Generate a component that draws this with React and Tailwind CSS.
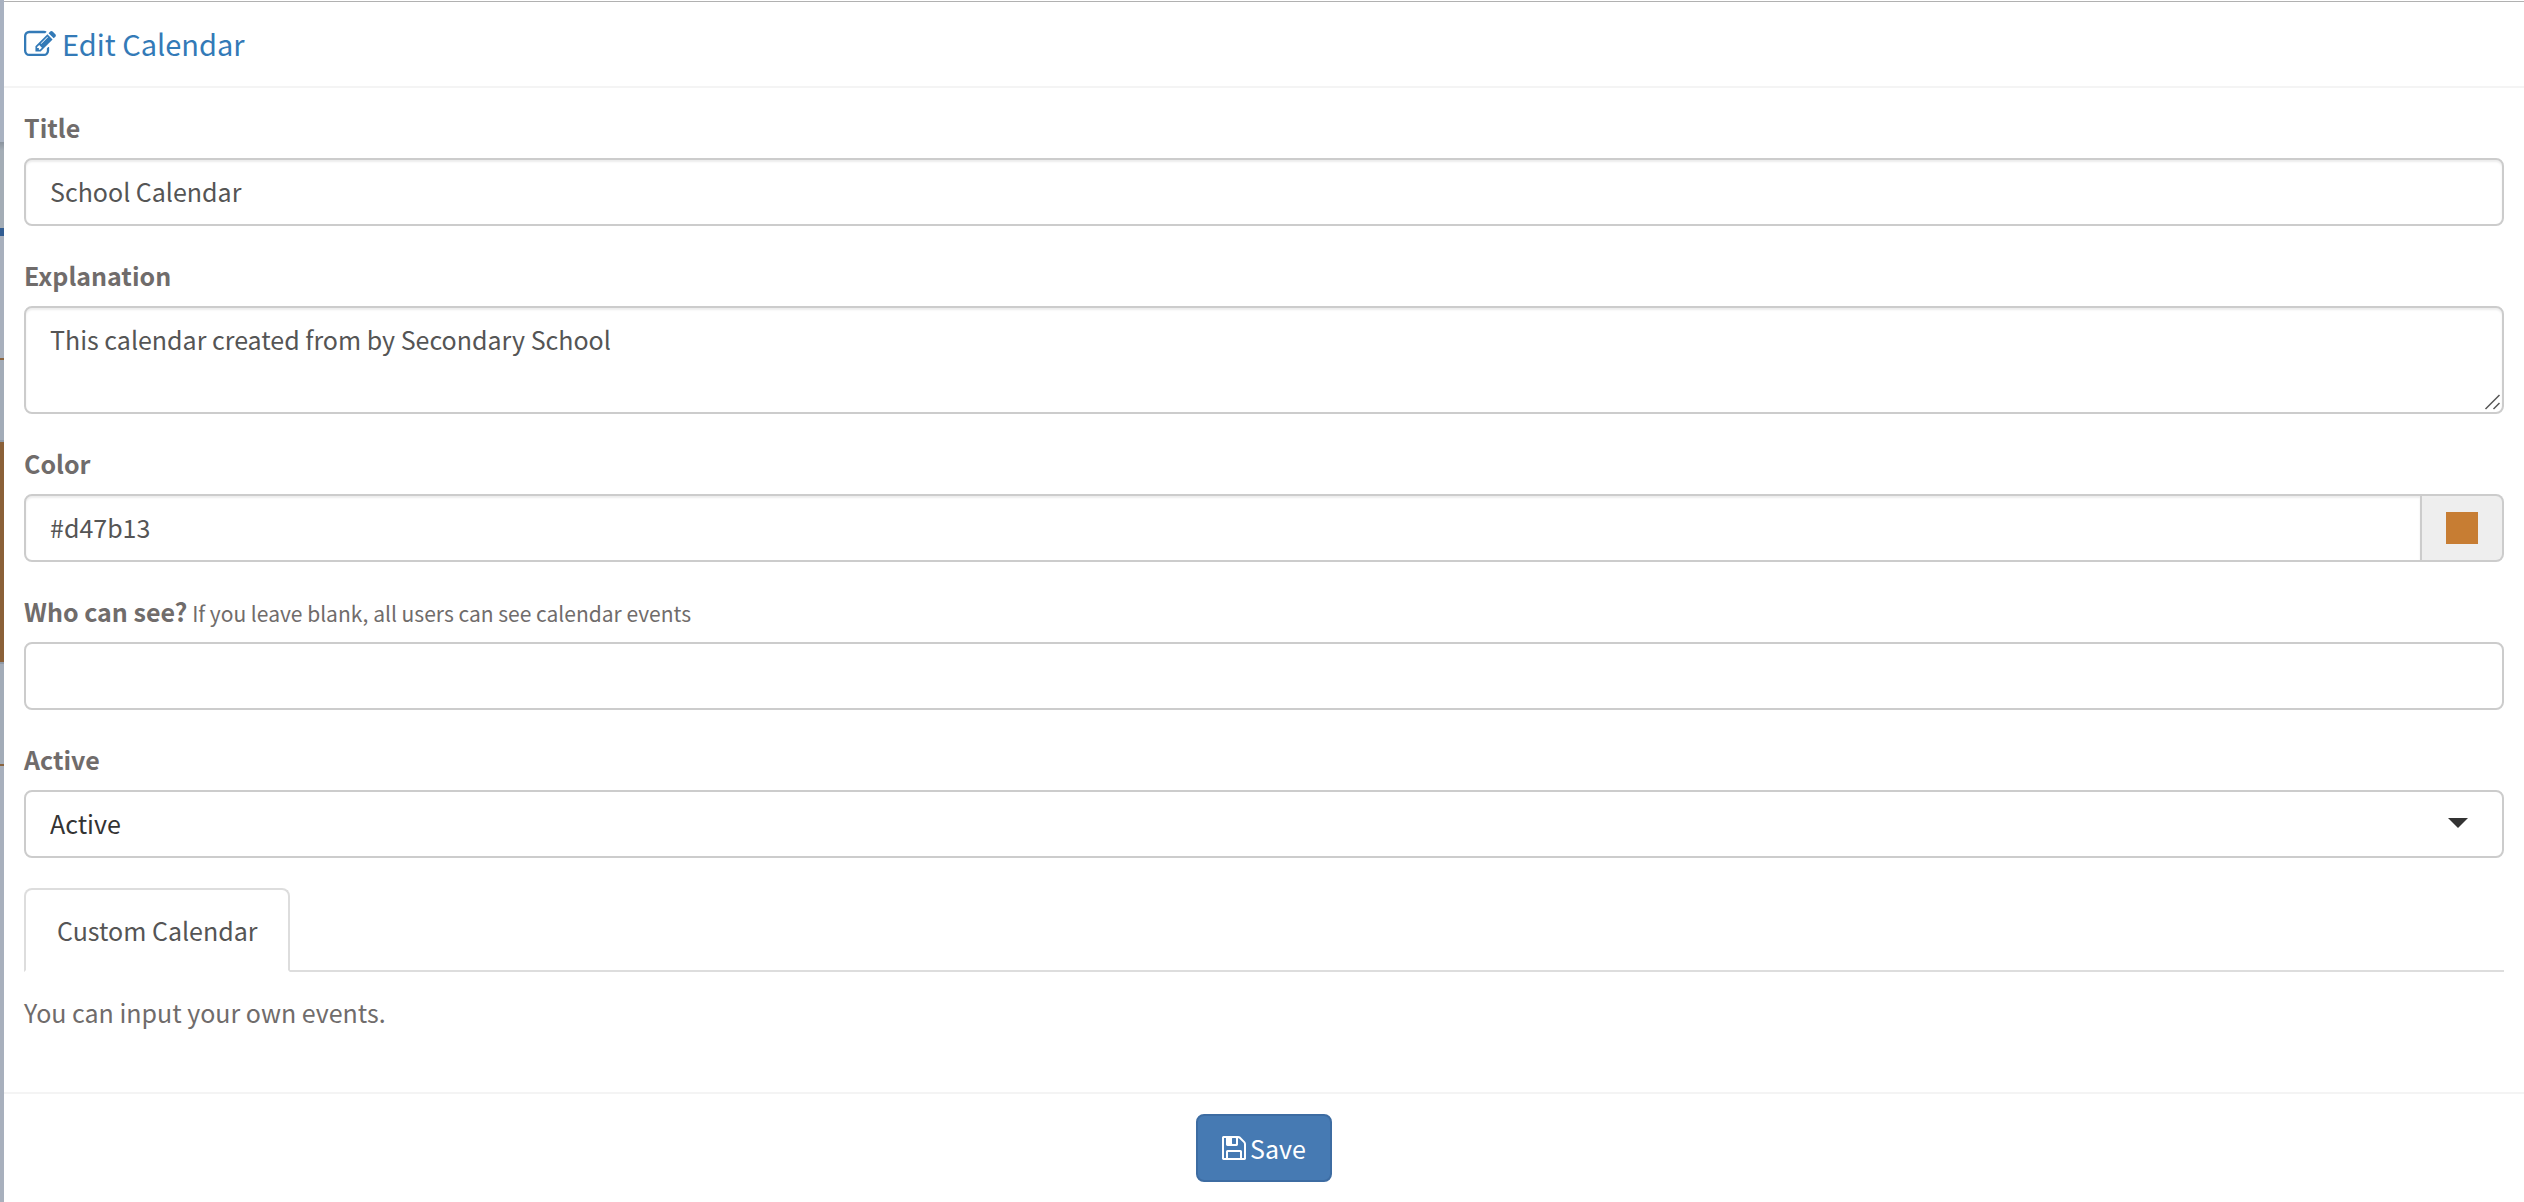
import { useState } from "react";

const control =
  "block w-full border-2 border-[#cccccc] bg-white px-6 text-[25px] leading-10 outline-none focus:border-[#66afe9]";
const inset = "shadow-[inset_0_2px_2px_rgba(0,0,0,0.075)]";

function EditIcon() {
  return (
    <svg viewBox="0 192 1792 1344" className="h-6 w-8 overflow-visible fill-current" aria-hidden="true">
      <path d="M888 1184l116-116-152-152-116 116v56h96v96h56zm440-720q-16-16-33 1l-350 350q-17 17-1 33t33-1l350-350q17-17 1-33zm80 594v190q0 119-84.5 203.5t-203.5 84.5h-832q-119 0-203.5-84.5t-84.5-203.5v-832q0-119 84.5-203.5t203.5-84.5h832q63 0 117 25 15 7 18 23 3 17-9 29l-49 49q-14 14-32 8-23-6-45-6h-832q-66 0-113 47t-47 113v832q0 66 47 113t113 47h832q66 0 113-47t47-113v-126q0-13 9-22l64-64q15-15 35-7t20 29zm-96-738l288 288-672 672h-288v-288zm444 132l-92 92-288-288 92-92q28-28 68-28t68 28l152 152q28 28 28 68t-28 68z" />
    </svg>
  );
}

function SaveIcon() {
  return (
    <svg viewBox="128 0 1536 1792" className="h-7 w-6 fill-current" aria-hidden="true">
      <path d="M512 1536h768v-384h-768v384zm896 0h128v-896q0-14-10-38.5t-20-34.5l-281-281q-10-10-34-20t-39-10v416q0 40-28 68t-68 28h-576q-40 0-68-28t-28-68v-416h-128v1280h128v-416q0-40 28-68t68-28h832q40 0 68 28t28 68v416zm-384-928v-320q0-13-9.5-22.5t-22.5-9.5h-192q-13 0-22.5 9.5t-9.5 22.5v320q0 13 9.5 22.5t22.5 9.5h192q13 0 22.5-9.5t9.5-22.5zm640 32v928q0 40-28 68t-68 28h-1344q-40 0-68-28t-28-68v-1344q0-40 28-68t68-28h928q40 0 88 20t76 48l280 280q28 28 48 76t20 88z" />
    </svg>
  );
}

function Field({ id, label, hint, children }) {
  return (
    <div className="flex flex-col gap-3">
      <label htmlFor={id} className="text-[25px] leading-[38px] font-bold text-[#706c6b]">
        {label}
        {hint && <span className="text-[21px] leading-none font-normal"> {hint}</span>}
      </label>
      {children}
    </div>
  );
}

// Sliver of the calendar page that stays visible beside the modal
function Backdrop() {
  return (
    <div className="flex w-1 shrink-0 flex-col bg-[#a8b0bd]" aria-hidden="true">
      <div className="h-[142px] bg-[#a9b2c1]" />
      <div className="h-[86px] bg-linear-to-b from-[#8b949e] to-[#a4adb6] to-10%" />
      <div className="h-2 bg-[#325d92]" />
      <div className="h-[122px]" />
      <div className="h-0.5 bg-[#8a6540]" />
      <div className="h-20 bg-[#a3acb8]" />
      <div className="h-0.5 bg-[#8f99a6]" />
      <div className="h-[220px] bg-[#8a6038]" />
      <div className="h-0.5 bg-[#8f99a6]" />
      <div className="h-[100px] bg-[#a3acb8]" />
      <div className="h-0.5 bg-[#8a6540]" />
    </div>
  );
}

export default function App() {
  const [title, setTitle] = useState("School Calendar");
  const [explanation, setExplanation] = useState("This calendar created from by Secondary School");
  const [color, setColor] = useState("#d47b13");
  const [viewers, setViewers] = useState("");
  const [active, setActive] = useState("1");

  return (
    <div className="flex min-h-screen bg-white font-['Noto_Sans_CJK_SC','Noto_Sans',sans-serif] text-[25px] leading-10 text-[#706c6b]">
      <Backdrop />
      <form className="mt-px flex min-w-0 flex-1 flex-col border-t border-[#b1b1b1]" onSubmit={(e) => e.preventDefault()}>
        <header className="border-b-2 border-[#f4f4f4] px-5 pt-5 pb-[22px]">
          <h4 className="flex items-baseline gap-1.5 text-[29px] leading-[42px] text-[#337ab7]">
            <EditIcon />
            Edit Calendar
          </h4>
        </header>

        <div className="flex flex-col gap-[30px] p-5 pb-15">
          <Field id="title" label="Title">
            <input
              id="title"
              value={title}
              onChange={(e) => setTitle(e.target.value)}
              className={`${control} ${inset} h-[68px] rounded-lg pb-0.5 text-[#555555]`}
            />
          </Field>

          <Field id="explanation" label="Explanation">
            <div className="relative">
              <textarea
                id="explanation"
                rows={2}
                value={explanation}
                onChange={(e) => setExplanation(e.target.value)}
                className={`${control} ${inset} h-[108px] resize-none rounded-lg py-[11px] text-[#555555]`}
              />
              <svg viewBox="0 0 16 16" className="absolute right-1 bottom-1 size-4 stroke-[#555555]" aria-hidden="true">
                <path d="M1.5 15L15.5 1M9.5 15L15.5 9" fill="none" strokeWidth="1.5" />
              </svg>
            </div>
          </Field>

          <Field id="color" label="Color">
            <div className="flex">
              <input
                id="color"
                value={color}
                onChange={(e) => setColor(e.target.value)}
                className={`${control} ${inset} h-[68px] min-w-0 flex-1 rounded-l-lg pb-0.5 text-[#555555]`}
              />
              <span className="flex items-center rounded-r-lg border-2 border-l-0 border-[#cccccc] bg-[#eeeeee] px-6">
                <i className="size-8 bg-[#c77d33]" />
              </span>
            </div>
          </Field>

          <Field id="viewers" label="Who can see?" hint="If you leave blank, all users can see calendar events">
            <input
              id="viewers"
              value={viewers}
              onChange={(e) => setViewers(e.target.value)}
              className={`${control} h-[68px] rounded-lg pb-0.5 text-[#555555]`}
            />
          </Field>

          <Field id="active" label="Active">
            <div className="relative">
              <select
                id="active"
                value={active}
                onChange={(e) => setActive(e.target.value)}
                className={`${control} h-[68px] appearance-none rounded-lg pb-0.5 text-[#333333]`}
              >
                <option value="1">Active</option>
                <option value="0">Passive</option>
              </select>
              <svg viewBox="0 0 20 10" className="pointer-events-none absolute top-7 right-9 h-2.5 w-5 fill-[#333333]" aria-hidden="true">
                <path d="M0 0h20L10 10z" />
              </svg>
            </div>
          </Field>

          <section className="flex flex-col gap-5">
            <div role="tablist" className="flex border-b-2 border-[#dddddd]">
              <button
                type="button"
                role="tab"
                aria-selected="true"
                className="-mb-0.5 rounded-t-lg border-2 border-[#dddddd] border-b-white bg-white px-[31px] py-5 text-[#555555]"
              >
                Custom Calendar
              </button>
            </div>
            <p>You can input your own events.</p>
          </section>
        </div>

        <footer className="flex justify-center border-t-2 border-[#f4f4f4] p-5">
          <button
            type="submit"
            className="flex items-center gap-1 rounded-lg border-2 border-[#3d6ca2] bg-[#467ab3] px-6 py-3 text-white"
          >
            <SaveIcon />
            Save
          </button>
        </footer>
      </form>
    </div>
  );
}
